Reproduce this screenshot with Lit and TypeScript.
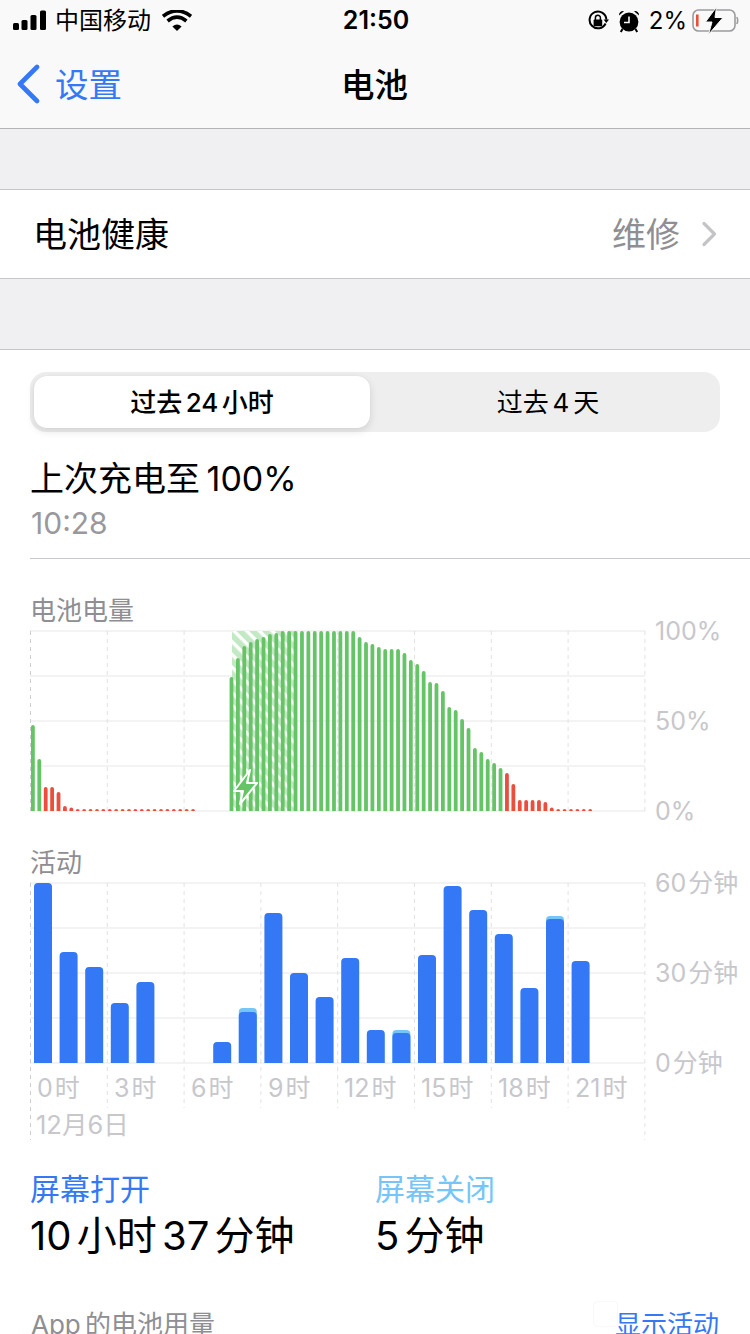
import { LitElement, html, css, svg } from "lit";
import { customElement } from "lit/decorators.js";

const GREEN = "#65c466";
const RED = "#eb4e3d";
const BLUE = "#3478f6";
const LIGHT = "#75c5f8";

const batt: number[] = [
  86, 52, 24, 24, 19, 5, 3.5, 2, 2, 2, 2, 2, 2, 2, 2, 2, 2, 2, 2, 2, 2, 2, 2, 2, 2, 2,
  0, 0, 0, 0, 0,
  134, 153, 165, 169, 172, 174, 177, 178,
  180, 180, 180, 180, 180, 180, 180, 180, 180, 180, 180, 180,
  174, 169, 167, 164, 162, 162, 162, 158, 151, 147, 140,
  129, 128, 120, 104, 101, 92, 83, 63, 59, 52, 48, 43,
  38, 27, 11, 11, 11, 11, 9, 3.5, 2, 2, 2, 2, 2, 2,
];
const battColour = (i: number) => (i <= 1 || (i >= 31 && i <= 73) ? GREEN : RED);

const act: [number, number][] = [
  [883, 0], [952, 0], [967, 0], [1003, 0], [982, 0], [0, 0], [0, 0], [1042, 0],
  [1012, 1008], [913, 0], [973, 0], [997, 0], [958, 0], [1030, 0], [1033, 1030],
  [955, 0], [886, 0], [910, 0], [934, 0], [988, 0], [919, 916], [961, 0],
];

const roundTop = (x: number, w: number, top: number, bottom: number, r: number) => {
  const rr = Math.min(r, bottom - top, w / 2);
  return `M${x} ${bottom}V${top + rr}Q${x} ${top} ${x + rr} ${top}H${x + w - rr}Q${x + w} ${top} ${x + w} ${top + rr}V${bottom}Z`;
};

const VX = [30.5, 107.3, 184.1, 260.9, 337.7, 414.5, 491.3, 568.1, 644.9];

@customElement("app-root")
export class AppRoot extends LitElement {
  static styles = css`
    :host {
      display: block;
      width: 750px;
      height: 1334px;
      overflow: hidden;
      position: relative;
      background: #f0f0f2;
      color: #000;
      font-family: Inter, "Noto Sans CJK SC", sans-serif;
    }
    .head {
      height: 128px;
      background: #f9f9f9;
      border-bottom: 1px solid #b4b4b8;
    }
    .status {
      height: 42px;
      display: flex;
      align-items: center;
      padding: 0 11px 0 13px;
      font-size: 24px;
    }
    .status .left, .status .right {
      flex: 1;
      display: flex;
      align-items: center;
    }
    .status .right { justify-content: flex-end; }
    .status .time { font-weight: 600; font-size: 25px; padding-bottom: 2px; }
    .carrier { margin: 0 11px 0 9px; font-weight: 400; padding-bottom: 5px; }
    .pct { margin: 0 5px 0 9px; font-size: 24px; font-weight: 400; padding-bottom: 2px; }
    .alarm { margin-left: 9px; }
    .nav {
      height: 86px;
      display: grid;
      grid-template-columns: 1fr auto 1fr;
      align-items: center;
      font-size: 33.5px;
      padding-bottom: 2px;
      box-sizing: border-box;
    }
    .back {
      display: flex;
      align-items: center;
      gap: 15px;
      padding-left: 16px;
      color: #3478f6;
    }
    .back span, .title { padding-bottom: 4px; }
    .title { font-weight: 500; padding-right: 1px; }
    .gap1 { height: 60px; }
    .row {
      height: 85px;
      background: #fff;
      border-top: 1px solid #c6c6c8;
      border-bottom: 1px solid #c6c6c8;
      display: flex;
      align-items: center;
      justify-content: space-between;
      padding: 0 32px 3px 33px;
      font-size: 34px;
    }
    .row .val {
      display: flex;
      align-items: center;
      gap: 21px;
      color: #8e8e93;
    }
    .row svg { margin-top: 3px; }
    .gap2 { height: 70px; }
    .main {
      background: #fff;
      border-top: 1px solid #c6c6c8;
      height: 990px;
      padding-top: 22px;
      box-sizing: border-box;
    }
    .seg {
      margin: 0 30px;
      height: 60px;
      border-radius: 16px;
      background: #eeeeef;
      padding: 4px;
      box-sizing: border-box;
      display: grid;
      grid-template-columns: 336px 1fr;
      font-size: 26px;
      word-spacing: -3.5px;
    }
    .seg div {
      display: flex;
      align-items: center;
      justify-content: center;
      padding-bottom: 3px;
      box-sizing: border-box;
    }
    .seg .other { padding-left: 10px; }
    .seg .on {
      background: #fff;
      border-radius: 13px;
      font-weight: 500;
      box-shadow: 0 3px 8px rgba(0, 0, 0, 0.12), 0 0 1px rgba(0, 0, 0, 0.08);
    }
    .charge {
      margin-left: 30px;
      padding: 25px 0 13px 0;
      border-bottom: 1px solid #c8c8cc;
    }
    .charge .big { font-size: 34px; line-height: 44px; word-spacing: -3px; }
    .charge .small { font-size: 30px; line-height: 44px; color: #98989d; padding-left: 1px; }
    .cap {
      font-size: 26px;
      color: #8e8e93;
      padding-left: 30px;
    }
    .cap.first { margin-top: 43px; line-height: 18px; }
    .cap.second { margin-top: 31px; line-height: 14px; }
    svg.chart { display: block; overflow: visible; }
    svg.chart text {
      fill: #c7c7cc;
      font-size: 25px;
      word-spacing: -5px;
      font-family: Inter, "Noto Sans CJK SC", sans-serif;
      dominant-baseline: central;
    }
    svg.chart text.date { font-size: 25.5px; }
    .stats {
      display: grid;
      grid-template-columns: 345px 1fr;
      padding: 28px 0 0 30px;
    }
    .stats .lab { font-size: 30px; line-height: 38px; }
    .stats .on { color: #3478f6; }
    .stats .off { color: #75c5f8; }
    .stats .num { font-size: 40px; line-height: 56px; word-spacing: -6px; }
    .foot {
      display: flex;
      justify-content: space-between;
      padding: 44px 31px 0 31px;
      font-size: 26px;
      line-height: 34px;
      color: #8e8e93;
      word-spacing: -3px;
    }
    .foot .link { color: #3478f6; }
    .mark {
      position: absolute;
      left: 593px;
      top: 1301px;
      width: 23px;
      height: 24px;
      border: 1px solid #f8f8f8;
      border-radius: 4px;
    }
  `;

  private grid(ys: number[], lastDashTo: number, edgeDashTo: number) {
    const top = ys[0];
    return svg`
      ${ys.map((y) => svg`<line x1="30" x2="645" y1=${y} y2=${y} stroke="#efeff0" stroke-width="1.5"></line>`)}
      ${VX.map((x, i) => {
        const edge = i === 0 || i === VX.length - 1;
        return svg`<line x1=${x} x2=${x} y1=${top} y2=${edge ? edgeDashTo : lastDashTo}
          stroke=${i === 0 ? "#cfcfd2" : "#e2e2e4"} stroke-width="1" stroke-dasharray="4 4"></line>`;
      })}
    `;
  }

  private batteryChart() {
    const base = 811;
    return html`<svg class="chart" width="750" height="205" viewBox="0 620 750 205">
      <defs>
        <pattern id="hatch" patternUnits="userSpaceOnUse" width="9" height="9" patternTransform="rotate(45)">
          <rect width="9" height="9" fill="#c3e8c4"></rect>
          <rect width="9" height="3.4" fill="#fff"></rect>
        </pattern>
      </defs>
      ${this.grid([631, 676, 721, 766, 811], 811, 811)}
      <rect x="232" y="631" width="65" height="180" fill="url(#hatch)"></rect>
      ${batt.map((h, i) =>
        h > 0
          ? svg`<path d=${roundTop(31 + 6.406 * i, 3.8, base - h, base, 1.9)} fill=${battColour(i)}></path>`
          : null
      )}
      <path d="M250 770 L234 791 L243 791 L240 804 L257 783 L247 783 Z" fill=${GREEN} stroke="#fff" stroke-width="2" stroke-linejoin="round"></path>
      <text x="655" y="631">100%</text>
      <text x="655" y="721">50%</text>
      <text x="655" y="811">0%</text>
    </svg>`;
  }

  private activityChart() {
    const base = 1063;
    const hours: [string, number][] = [
      ["0 时", 37], ["3 时", 114], ["6 时", 191], ["9 时", 268],
      ["12 时", 344], ["15 时", 421], ["18 时", 498], ["21 时", 575],
    ];
    return html`<svg class="chart" width="750" height="272" viewBox="0 870 750 272">
      ${this.grid([883, 928, 973, 1018, 1063], 1108, 1140)}
      ${act.map(([dark, light], i) => {
        const x = 34 + 25.6 * i;
        return svg`
          ${light ? svg`<path d=${roundTop(x, 18, light, base, 4)} fill=${LIGHT}></path>` : null}
          ${dark ? svg`<path d=${roundTop(x, 18, dark, base, 4)} fill=${BLUE}></path>` : null}
        `;
      })}
      <text x="655" y="883">60 分钟</text>
      <text x="655" y="973">30 分钟</text>
      <text x="655" y="1063">0 分钟</text>
      ${hours.map(([t, x]) => svg`<text x=${x} y="1088">${t}</text>`)}
      <text class="date" x="36" y="1124">12月6日</text>
    </svg>`;
  }

  render() {
    return html`
      <div class="head">
        <div class="status">
          <div class="left">
            <svg width="33" height="22" viewBox="0 0 33 22">
              <rect x="0" y="13" width="6" height="7" rx="1.5"></rect>
              <rect x="8.5" y="10" width="6" height="10" rx="1.5"></rect>
              <rect x="17.5" y="5" width="6" height="15" rx="1.5"></rect>
              <rect x="27" y="0.5" width="6" height="19.5" rx="1.5"></rect>
            </svg>
            <span class="carrier">中国移动</span>
            <svg width="30" height="22" viewBox="0 0 30 22">
              <path d="M15 21 L10.4 16.4 Q15 12.6 19.6 16.4 Z" fill="#000"></path>
              <path d="M5.6 11 Q15 3.4 24.4 11" fill="none" stroke="#000" stroke-width="3.6"></path>
              <path d="M1 6.2 Q15 -4.4 29 6.2" fill="none" stroke="#000" stroke-width="3.6"></path>
            </svg>
          </div>
          <span class="time">21:50</span>
          <div class="right">
            <svg width="22" height="22" viewBox="0 0 22 22">
              <path d="M18.6 13.5 A8.4 8.4 0 1 1 19.4 9.6" fill="none" stroke="#000" stroke-width="2"></path>
              <path d="M16.6 9.5 L22 9.5 L19.3 13 Z" fill="#000"></path>
              <rect x="6.6" y="9.6" width="8.6" height="6.6" rx="1" fill="#000"></rect>
              <path d="M8.4 10 V7.8 A2.5 2.5 0 0 1 13.4 7.8 V10" fill="none" stroke="#000" stroke-width="1.5"></path>
            </svg>
            <svg class="alarm" width="22" height="24" viewBox="0 0 22 24">
              <circle cx="11" cy="13" r="9.4" fill="#000"></circle>
              <path d="M11 7.5 V13.5 H6" fill="none" stroke="#f9f9f9" stroke-width="1.6"></path>
              <path d="M1 6.5 A4 4 0 0 1 6 2.2 Z M21 6.5 A4 4 0 0 0 16 2.2 Z" fill="#000"></path>
              <path d="M4.5 20 L2.8 23 M17.5 20 L19.2 23" stroke="#000" stroke-width="2"></path>
            </svg>
            <span class="pct">2%</span>
            <svg width="47" height="28" viewBox="0 0 47 28">
              <rect x="1" y="3" width="42" height="21" rx="5.5" fill="none" stroke="#9c9c9f" stroke-width="1.6"></rect>
              <rect x="4" y="7.5" width="2.6" height="12" fill="${RED}"></rect>
              <path d="M44.8 10 Q46.6 13.5 44.8 17" fill="none" stroke="#9c9c9f" stroke-width="1.6"></path>
              <path d="M24.5 0 L13.5 15 L20 15 L16.5 27.5 L31 10.5 L23 10.5 Z" fill="#000" stroke="#f9f9f9" stroke-width="1"></path>
            </svg>
          </div>
        </div>
        <div class="nav">
          <div class="back">
            <svg width="24" height="40" viewBox="0 0 24 40">
              <path d="M21 3 L4 20 L21 37" fill="none" stroke="${BLUE}" stroke-width="4.6" stroke-linecap="round" stroke-linejoin="round"></path>
            </svg>
            <span>设置</span>
          </div>
          <div class="title">电池</div>
          <div></div>
        </div>
      </div>
      <div class="gap1"></div>
      <div class="row">
        <span>电池健康</span>
        <span class="val">
          <span>维修</span>
          <svg width="17" height="26" viewBox="0 0 17 26">
            <path d="M3 2.5 L13.5 13 L3 23.5" fill="none" stroke="#c4c4c7" stroke-width="3.2" stroke-linecap="round" stroke-linejoin="round"></path>
          </svg>
        </span>
      </div>
      <div class="gap2"></div>
      <div class="main">
        <div class="seg">
          <div class="on">过去 24 小时</div>
          <div class="other">过去 4 天</div>
        </div>
        <div class="charge">
          <div class="big">上次充电至 100%</div>
          <div class="small">10:28</div>
        </div>
        <div class="cap first">电池电量</div>
        ${this.batteryChart()}
        <div class="cap second">活动</div>
        ${this.activityChart()}
        <div class="stats">
          <div>
            <div class="lab on">屏幕打开</div>
            <div class="num">10 小时 37 分钟</div>
          </div>
          <div>
            <div class="lab off">屏幕关闭</div>
            <div class="num">5 分钟</div>
          </div>
        </div>
        <div class="foot">
          <span>App 的电池用量</span>
          <span class="link">显示活动</span>
        </div>
      </div>
      <div class="mark"></div>
    `;
  }
}
